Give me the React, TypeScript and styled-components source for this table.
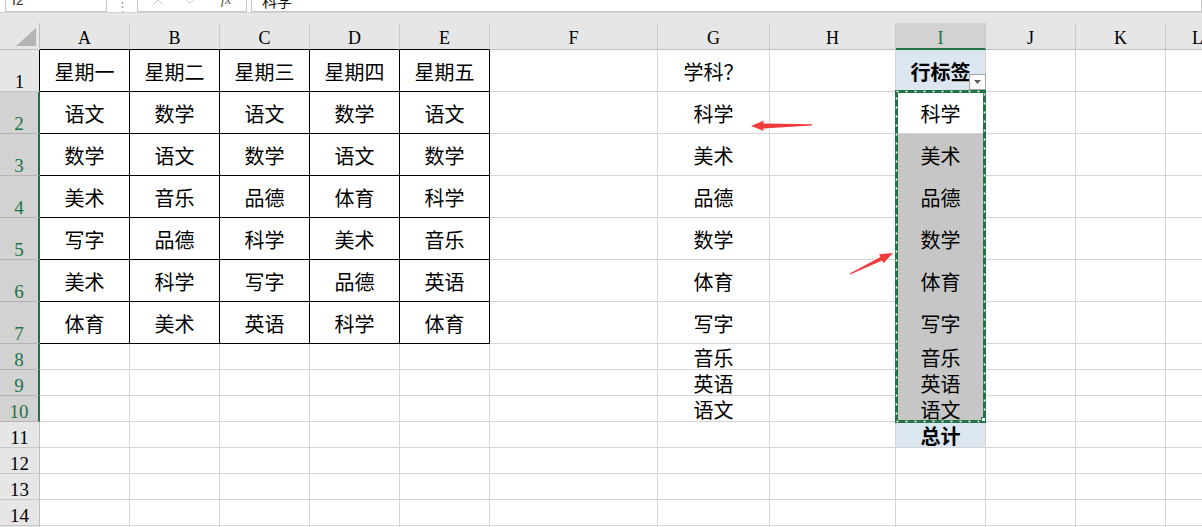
import React from "react";
import styled, { createGlobalStyle } from "styled-components";
import { X, Check } from "lucide-react";

const GREEN = "#217346";
const GRID = "#d4d4d4";
const HEAD_LINE = "#bfbfbf";

const columns = ["A", "B", "C", "D", "E", "F", "G", "H", "I", "J", "K", "L"];
const colWidths = [90, 90, 90, 90, 90, 168, 112, 126, 90, 90, 90, 64];
const rowCount = 15;

const schedule = [
  ["星期一", "星期二", "星期三", "星期四", "星期五"],
  ["语文", "数学", "语文", "数学", "语文"],
  ["数学", "语文", "数学", "语文", "数学"],
  ["美术", "音乐", "品德", "体育", "科学"],
  ["写字", "品德", "科学", "美术", "音乐"],
  ["美术", "科学", "写字", "品德", "英语"],
  ["体育", "美术", "英语", "科学", "体育"],
];

const subjects = ["学科？", "科学", "美术", "品德", "数学", "体育", "写字", "音乐", "英语", "语文"];
const pivot = ["行标签", "科学", "美术", "品德", "数学", "体育", "写字", "音乐", "英语", "语文", "总计"];

const GlobalStyle = createGlobalStyle`
  html, body {
    margin: 0;
    padding: 0;
    background: #fff;
  }
  body {
    font-family: "Noto Sans CJK SC", "Noto Sans", sans-serif;
    overflow: hidden;
  }
`;

const Page = styled.div`
  position: relative;
  width: 1202px;
  height: 527px;
  overflow: hidden;
  background: #fff;
`;

const FormulaBar = styled.div`
  height: 12px;
  border-bottom: 1px solid #d4d4d4;
  display: flex;
  align-items: flex-end;
  overflow: hidden;
  background: #fff;
`;

const Box = styled.div<{ $width?: number; $gap: number }>`
  box-sizing: border-box;
  flex: ${(p) => (p.$width ? `0 0 ${p.$width}px` : "1 1 auto")};
  margin-left: ${(p) => p.$gap}px;
  height: 24px;
  border: 1px solid #c6c6c6;
  background: #fff;
  display: flex;
  align-items: center;
  font-family: "Liberation Sans", Arial, sans-serif;
  font-size: 14px;
  color: #333;
`;

const NameText = styled.span`
  padding-left: 6px;
`;

const Dots = styled.span`
  flex: 0 0 30px;
  align-self: center;
  text-align: center;
  color: #9a9a9a;
  font-size: 13px;
  line-height: 22px;
`;

const ToolIcon = styled.span<{ $left: number }>`
  display: flex;
  margin-left: ${(p) => p.$left}px;
  color: #c4c4c4;
`;

const Fx = styled.span`
  margin-left: 21px;
  font-family: "Liberation Serif", serif;
  font-style: italic;
  font-size: 14px;
  color: #555;
`;

const FormulaText = styled.span`
  padding-left: 10px;
  font-family: "Noto Sans CJK SC", sans-serif;
  font-size: 15px;
  color: #111;
`;

const Strip = styled.div`
  height: 10px;
  background: #e6e6e6;
`;

const Sheet = styled.div`
  position: relative;
  display: grid;
  grid-template-columns: 40px ${colWidths.map((w) => `${w}px`).join(" ")};
  grid-template-rows: 27px repeat(7, 42px) repeat(8, 26px);
`;

const Corner = styled.div`
  box-sizing: border-box;
  background: #e6e6e6;
  border-right: 1px solid ${HEAD_LINE};
  border-bottom: 1px solid ${HEAD_LINE};
  display: flex;
  align-items: flex-end;
  justify-content: flex-end;
  padding: 0 3px 3px 0;
`;

const ColHead = styled.div<{ $sel?: boolean; $edge?: string }>`
  box-sizing: border-box;
  background: ${(p) => (p.$sel ? "#d2d2d2" : "#e6e6e6")};
  color: ${(p) => (p.$sel ? GREEN : "#000")};
  border-right: 1px solid #c8c8c8;
  border-bottom: ${(p) => (p.$sel ? `2px solid ${GREEN}` : `1px solid ${p.$edge || HEAD_LINE}`)};
  display: flex;
  justify-content: center;
  align-items: flex-end;
  padding-bottom: ${(p) => (p.$sel ? 1 : 2)}px;
  font-family: "Liberation Serif", "DejaVu Serif", serif;
  font-size: 18px;
  line-height: 18px;
`;

const RowHead = styled.div<{ $sel?: boolean; $edge?: string }>`
  box-sizing: border-box;
  background: ${(p) => (p.$sel ? "#d2d2d2" : "#e6e6e6")};
  color: ${(p) => (p.$sel ? GREEN : "#000")};
  border-bottom: 1px solid ${(p) => (p.$sel ? "#b4b4b4" : "#c6c6c6")};
  border-right: ${(p) => (p.$sel ? `2px solid ${GREEN}` : `1px solid ${p.$edge || HEAD_LINE}`)};
  display: flex;
  justify-content: center;
  align-items: flex-end;
  font-family: "Liberation Serif", "DejaVu Serif", serif;
  font-size: 19px;
  line-height: 19px;
`;

const Cell = styled.div<{ $line?: string; $bg?: string; $bold?: boolean }>`
  position: relative;
  box-sizing: border-box;
  border-right: 1px solid ${(p) => p.$line || GRID};
  border-bottom: 1px solid ${(p) => p.$line || GRID};
  background: ${(p) => p.$bg || "#fff"};
  display: flex;
  align-items: center;
  justify-content: center;
  padding-top: 2px;
  font-size: 20px;
  line-height: 20px;
  font-weight: ${(p) => (p.$bold ? 700 : 400)};
  color: #000;
  white-space: nowrap;
`;

const FilterButton = styled.span`
  position: absolute;
  right: -1px;
  bottom: 1px;
  box-sizing: border-box;
  width: 17px;
  height: 16px;
  border: 1px solid #a6a6a6;
  background: #fdfdfd;
  display: flex;
  align-items: center;
  justify-content: center;
`;

const Ants = styled.svg`
  position: absolute;
  left: 895px;
  top: 67px;
  width: 91px;
  height: 333px;
  pointer-events: none;
`;

const Arrows = styled.svg`
  position: absolute;
  left: 0;
  top: 0;
  width: 1202px;
  height: 527px;
  pointer-events: none;
`;

function cellFor(r: number, c: number) {
  const col = columns[c];
  if (c <= 4 && r <= 7) {
    return <Cell key={`${col}${r}`} $line="#000">{schedule[r - 1][c]}</Cell>;
  }
  if (col === "G" && r <= subjects.length) {
    return <Cell key={`${col}${r}`}>{subjects[r - 1]}</Cell>;
  }
  if (col === "I" && r <= pivot.length) {
    const text = pivot[r - 1];
    if (r === 1 || r === 11) {
      return (
        <Cell key={`${col}${r}`} $bg="#dce6f1" $bold>
          {text}
          {r === 1 && (
            <FilterButton>
              <svg width="7" height="4" viewBox="0 0 7 4">
                <polygon points="0,0 7,0 3.5,4" fill="#5f5f5f" />
              </svg>
            </FilterButton>
          )}
        </Cell>
      );
    }
    if (r === 2) return <Cell key={`${col}${r}`}>{text}</Cell>;
    return (
      <Cell key={`${col}${r}`} $bg="#c6c6c6" $line="#c6c6c6">
        {text}
      </Cell>
    );
  }
  return <Cell key={`${col}${r}`} />;
}

const App = () => {
  const rows = Array.from({ length: rowCount }, (_, i) => i + 1);

  return (
    <Page>
      <GlobalStyle />
      <FormulaBar>
        <Box $width={102} $gap={5}>
          <NameText>I2</NameText>
        </Box>
        <Dots>⋮</Dots>
        <Box $width={110} $gap={0}>
          <ToolIcon $left={12}>
            <X size={16} strokeWidth={1.5} />
          </ToolIcon>
          <ToolIcon $left={18}>
            <Check size={16} strokeWidth={1.5} />
          </ToolIcon>
          <Fx>fx</Fx>
        </Box>
        <Box $gap={4}>
          <FormulaText>科学</FormulaText>
        </Box>
      </FormulaBar>
      <Strip />
      <Sheet>
        <Corner>
          <svg width="20" height="18" viewBox="0 0 20 18">
            <polygon points="20,0 20,18 0,18" fill="#b4b4b4" />
          </svg>
        </Corner>
        {columns.map((col, c) => (
          <ColHead key={col} $sel={col === "I"} $edge={c <= 4 ? "#000" : undefined}>
            {col}
          </ColHead>
        ))}
        {rows.map((r) => (
          <React.Fragment key={r}>
            <RowHead $sel={r >= 2 && r <= 10} $edge={r === 1 ? "#000" : undefined}>
              {r}
            </RowHead>
            {columns.map((_, c) => cellFor(r, c))}
          </React.Fragment>
        ))}
        <Ants viewBox="0 0 91 333">
          <rect x="1.5" y="1.5" width="88" height="330" fill="none" stroke={GREEN} strokeWidth="3" />
          <rect
            x="1.5"
            y="1.5"
            width="88"
            height="330"
            fill="none"
            stroke="#fff"
            strokeWidth="1.6"
            strokeDasharray="2 7"
          />
          <rect x="86.5" y="327.5" width="4" height="4" fill="#fff" stroke={GREEN} strokeWidth="1" />
        </Ants>
      </Sheet>
      <Arrows viewBox="0 0 1202 527">
        <polygon
          points="751,126 764,120.5 763,123.6 812,124.3 812,125.4 763,128.6 764,131"
          fill="#f23c3c"
        />
        <polygon
          points="893,253 883.5,263.2 882.2,260.5 850.2,274.5 849.8,273.6 880.4,256.9 879.1,254.2"
          fill="#f23c3c"
        />
      </Arrows>
    </Page>
  );
};

export default App;
